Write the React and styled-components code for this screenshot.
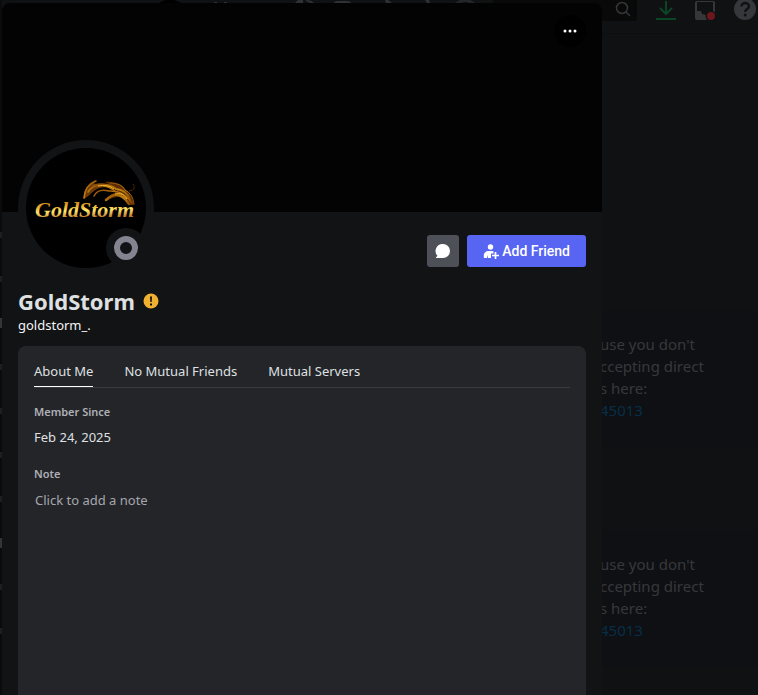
import React from "react";
import styled, { createGlobalStyle } from "styled-components";

const GlobalStyle = createGlobalStyle`
  * { box-sizing: border-box; }
  body {
    margin: 0;
    background: #101113;
    color: #dfe0e2;
    font-family: "Noto Sans", Roboto, sans-serif;
    font-size: 13px;
    line-height: 18px;
  }
  button { font: inherit; color: inherit; border: 0; padding: 0; cursor: pointer; }
  svg { display: block; flex: none; }
`;

const Page = styled.div`
  position: relative;
  min-height: 100vh;
  display: flex;
  overflow: hidden;
`;

const Sidebar = styled.div`
  width: 2px;
  padding-top: 213px;
  background: #0b0b0c;
`;

const SidebarRow = styled.div`
  height: 44px;
  display: flex;
  align-items: center;
  &::before {
    content: "";
    width: 2px;
    height: ${(props) => (props.$strong ? "10px" : "6px")};
    background: ${(props) => (props.$strong ? "#343538" : "#1e1f21")};
  }
`;

const Main = styled.div`
  flex: 1;
  min-width: 0;
`;

const TopBar = styled.header`
  height: 34px;
  display: flex;
  justify-content: flex-end;
  align-items: flex-start;
  padding-right: 2px;
  border-bottom: 1px solid #0d0e10;
`;

const CallTools = styled.div`
  margin-right: 18px;
`;

const SearchBox = styled.div`
  width: 144px;
  height: 21px;
  display: flex;
  justify-content: flex-end;
  padding-right: 6px;
  border-radius: 0 0 3px 3px;
  background: #09090a;
`;

const BarButton = styled.button`
  height: 21px;
  margin-left: 19px;
  background: none;
`;

const Feed = styled.div`
  padding-top: 276px;
  padding-left: 598px;
  display: flex;
  flex-direction: column;
  gap: 83px;
`;

const Notice = styled.div`
  height: 137px;
  padding-top: 23px;
  background: #0f1014;
  color: #37383b;
  font-size: 15px;
  line-height: 22px;
  white-space: nowrap;
  a { color: #062f47; text-decoration: none; }
`;

const Modal = styled.section`
  position: absolute;
  top: 3px;
  bottom: 0;
  left: 2px;
  width: calc(100% - 158px);
  display: flex;
  flex-direction: column;
  overflow: hidden;
  border-radius: 8px 8px 0 0;
  background: #121315;
`;

const Banner = styled.div`
  flex: none;
  height: 209px;
  display: flex;
  justify-content: flex-end;
  align-items: flex-start;
  padding: 12px 16px;
  background: #030303;
`;

const MoreButton = styled.button`
  width: 32px;
  height: 32px;
  display: grid;
  place-items: center;
  border-radius: 50%;
  background: #000;
  color: #fff;
`;

const Header = styled.div`
  display: flex;
  justify-content: space-between;
  align-items: flex-start;
  padding: 0 16px;
`;

const Avatar = styled.div`
  margin-top: -72px;
`;

const Actions = styled.div`
  display: flex;
  gap: 8px;
  padding-top: 23px;
`;

const ActionButton = styled.button`
  height: 32px;
  display: flex;
  align-items: center;
  justify-content: center;
  gap: 3px;
  padding: 0 ${(props) => (props.$primary ? "16px" : "8px")};
  border-radius: 3px;
  background: ${(props) => (props.$primary ? "#5865f2" : "#4e5058")};
  color: #fff;
  font-family: Roboto, "Noto Sans", sans-serif;
  font-size: 14px;
  font-weight: 500;
`;

const Identity = styled.div`
  padding: 10px 16px 12px;
`;

const NameRow = styled.div`
  display: flex;
  align-items: center;
  gap: 8px;
`;

const Name = styled.h1`
  margin: 0;
  font-size: 22px;
  line-height: 30px;
  font-weight: 700;
`;

const Username = styled.div`
  color: #f4f4f5;
`;

const Card = styled.div`
  flex: 1;
  margin: 0 16px;
  padding: 16px 16px 0;
  border-radius: 8px 8px 0 0;
  background: #242529;
`;

const Tabs = styled.div`
  display: flex;
  gap: 31px;
  border-bottom: 1px solid #3a3b40;
`;

const Tab = styled.button`
  height: 25px;
  padding-bottom: 6px;
  background: none;
  border-bottom: ${(props) => (props.$active ? "1px solid #fff" : "1px solid transparent")};
`;

const Field = styled.div`
  padding-top: 16px;
  padding-bottom: 4px;
`;

const Label = styled.label`
  display: block;
  margin: 0 0 8px;
  color: #aeb0b6;
  font-size: 11px;
  line-height: 16px;
  font-weight: 600;
`;

const NoteInput = styled.input`
  width: 100%;
  height: 20px;
  padding: 1px;
  border: 0;
  outline: 0;
  background: transparent;
  color: #dfe0e2;
  font: inherit;
  &::placeholder { color: #a5a7ae; opacity: 1; }
`;

function AvatarArt() {
  return (
    <svg width="136" height="136" viewBox="0 0 136 136" role="img" aria-label="GoldStorm avatar">
      <defs>
        <linearGradient id="gold" x1="0" y1="0" x2="0.15" y2="1">
          <stop offset="0" stopColor="#a85b12" />
          <stop offset="0.4" stopColor="#e9a828" />
          <stop offset="0.6" stopColor="#ffe66b" />
          <stop offset="1" stopColor="#a8500f" />
        </linearGradient>
        <linearGradient id="flame" x1="0" y1="0" x2="1" y2="1">
          <stop offset="0" stopColor="#8b4d0b" />
          <stop offset="0.5" stopColor="#c7820f" />
          <stop offset="1" stopColor="#8a4a08" />
        </linearGradient>
      </defs>
      <circle cx="68" cy="68" r="68" fill="#121315" />
      <circle cx="68" cy="68" r="60" fill="#000" />
      <path d="M66 59C65 50 70 43 78 40L76 44C84 42 91 44 96 49C88 46 80 47 76 51C72 54 70 57 66 59Z" fill="#6a3907" />
      <path d="M87 42C98 41 104 45 107 50C112 53 115 58 116 65H110C109 58 101 53 88 61C91 54 96 52 102 54C98 48 92 47 84 46L94 46Z" fill="#5a2d05" />
      <g fill="none" stroke="url(#flame)" strokeLinecap="round">
        <path d="M66 58Q67 45 78 41M70 52Q76 43 87 46Q94 48 98 52" strokeWidth="1.6" />
        <path d="M75 46Q90 42 98 49Q109 50 112 60" strokeWidth="2" />
        <path d="M76 56Q80 48 91 51Q105 50 114 63" strokeWidth="1.5" />
        <path d="M88 60Q98 50 107 59L111 64" strokeWidth="2.5" />
        <path d="M92 43Q104 43 107 50Q115 54 116 64" strokeWidth="1" />
      </g>
      <path d="M80 46Q90 44 96 49M97 54Q105 52 109 59" fill="none" stroke="#efb52c" strokeWidth="1" />
      <path d="M111 51Q119 50 115 44" fill="none" stroke="#4a2606" />
      <text x="17" y="77" fontFamily="Liberation Serif, serif" fontSize="22" fontWeight="700" fontStyle="italic" fill="url(#gold)">GoldStorm</text>
      <circle cx="108" cy="108" r="20" fill="#121315" />
      <circle cx="108" cy="108" r="9" fill="none" stroke="#82858f" strokeWidth="6" />
    </svg>
  );
}

// lower edges of the call buttons, the rest is cut off by the window
function ToolFragments() {
  return (
    <svg width="320" height="3" viewBox="155 0 320 3" aria-hidden="true">
      <path d="M159 3Q170-4 181 3Z" fill="#000" />
      <path d="M214 2h3v1h-3ZM224 2h3v1h-3ZM295 3l3-3h5v3ZM306 0q5 0 8 3h-4l-4-2ZM334 3q0-2 4-2h9q4 0 4 2ZM385 0h3l4 3h-6ZM425 0h4l1 3h-3Z" fill="#303136" />
      <path d="M456 4Q465-3 474 4" fill="none" stroke="#242529" strokeWidth="3" />
    </svg>
  );
}

function DownloadIcon() {
  return (
    <svg width="20" height="19" viewBox="0 0 20 19" fill="none" stroke="#0c4426" strokeWidth="2">
      <path d="M10 0v13M4 7l6 6 6-6M0 18h20" />
    </svg>
  );
}

function InboxIcon() {
  return (
    <svg width="20" height="20" viewBox="0 0 20 20">
      <path d="M2 0h16q2 0 2 2v15q0 2-2 2H2q-2 0-2-2V2q0-2 2-2Z" fill="#36373b" />
      <path d="M2 1h16v9h-5v2l-2 2-4-1-1-3H2Z" fill="#101113" />
      <circle cx="16" cy="15" r="5.5" fill="#101113" />
      <circle cx="16" cy="15" r="4" fill="#6b171b" />
    </svg>
  );
}

function HelpIcon() {
  return (
    <svg width="22" height="22" viewBox="0 0 22 22">
      <circle cx="11" cy="9" r="11" fill="#36373b" />
      <path d="M7.5 6.5C7.5 1.7 15 2 15 6.3C15 9.2 11.2 8.8 11.2 12" fill="none" stroke="#101113" strokeWidth="2.4" />
      <circle cx="11.2" cy="15" r="1.5" fill="#101113" />
    </svg>
  );
}

function AddFriendIcon() {
  return (
    <svg width="16" height="16" viewBox="0 0 16 16">
      <circle cx="7.5" cy="4" r="2.7" fill="#fff" />
      <path d="M1 15C0 11 2 8 6 8h2.500c3 0 4 1 4 3h-1v2H8v2H5v-3l-1 3Z" fill="#fff" />
      <path d="M12.500 8v8M8 12.500h8" stroke="#5865f2" strokeWidth="4" />
      <path d="M12.500 9v7M9 12.500h7" stroke="#fff" strokeWidth="1.700" />
    </svg>
  );
}

function MessageIcon() {
  return (
    <svg width="16" height="16" viewBox="0 0 16 16">
      <path d="M8 1a7 7 0 1 1 0 14H1.700q-1.200 0-.4-.9l1.200-1.300A7 7 0 0 1 8 1Z" fill="#fff" />
    </svg>
  );
}

function Message() {
  return (
    <Notice>
      <div>use you don't</div>
      <div>ccepting direct</div>
      <div>s here:</div>
      <a href="#45013">45013</a>
    </Notice>
  );
}

const rows = [false, false, true, false, false, false, false, true, false, false];

export default function App() {
  return (
    <Page>
      <GlobalStyle />
      <Sidebar aria-hidden="true">
        {rows.map((strong, i) => <SidebarRow key={i} $strong={strong} />)}
      </Sidebar>
      <Main>
        <TopBar>
          <CallTools><ToolFragments /></CallTools>
          <SearchBox>
            <svg width="17" height="17" viewBox="0 0 17 17" fill="none" stroke="#36373b" strokeWidth="1.5">
              <circle cx="8" cy="8" r="5.500" />
              <path d="M12 12l4 4" />
            </svg>
          </SearchBox>
          <BarButton aria-label="Downloads"><DownloadIcon /></BarButton>
          <BarButton aria-label="Inbox"><InboxIcon /></BarButton>
          <BarButton aria-label="Help"><HelpIcon /></BarButton>
        </TopBar>
        <Feed>
          <Message />
          <Message />
        </Feed>
      </Main>

      <Modal role="dialog" aria-label="User profile">
        <Banner>
          <MoreButton aria-label="More">
            <svg width="16" height="4" viewBox="0 0 16 4" fill="currentColor">
              <circle cx="3" cy="2" r="1.500" />
              <circle cx="8" cy="2" r="1.500" />
              <circle cx="13" cy="2" r="1.500" />
            </svg>
          </MoreButton>
        </Banner>
        <Header>
          <Avatar><AvatarArt /></Avatar>
          <Actions>
            <ActionButton aria-label="Message"><MessageIcon /></ActionButton>
            <ActionButton $primary><AddFriendIcon />Add Friend</ActionButton>
          </Actions>
        </Header>
        <Identity>
          <NameRow>
            <Name>GoldStorm</Name>
            <svg width="16" height="16" viewBox="0 0 16 16">
              <circle cx="8" cy="8" r="7.500" fill="#f0b132" />
              <path d="M7 3.500h2l-.3 5.500H7.300ZM7 10.500h2v2H7Z" fill="#121315" />
            </svg>
          </NameRow>
          <Username>goldstorm_.</Username>
        </Identity>
        <Card>
          <Tabs role="tablist">
            <Tab role="tab" aria-selected="true" $active>About Me</Tab>
            <Tab role="tab" aria-selected="false">No Mutual Friends</Tab>
            <Tab role="tab" aria-selected="false">Mutual Servers</Tab>
          </Tabs>
          <Field>
            <Label as="h2">Member Since</Label>
            <div>Feb 24, 2025</div>
          </Field>
          <Field>
            <Label htmlFor="note">Note</Label>
            <NoteInput id="note" placeholder="Click to add a note" />
          </Field>
        </Card>
      </Modal>
    </Page>
  );
}
